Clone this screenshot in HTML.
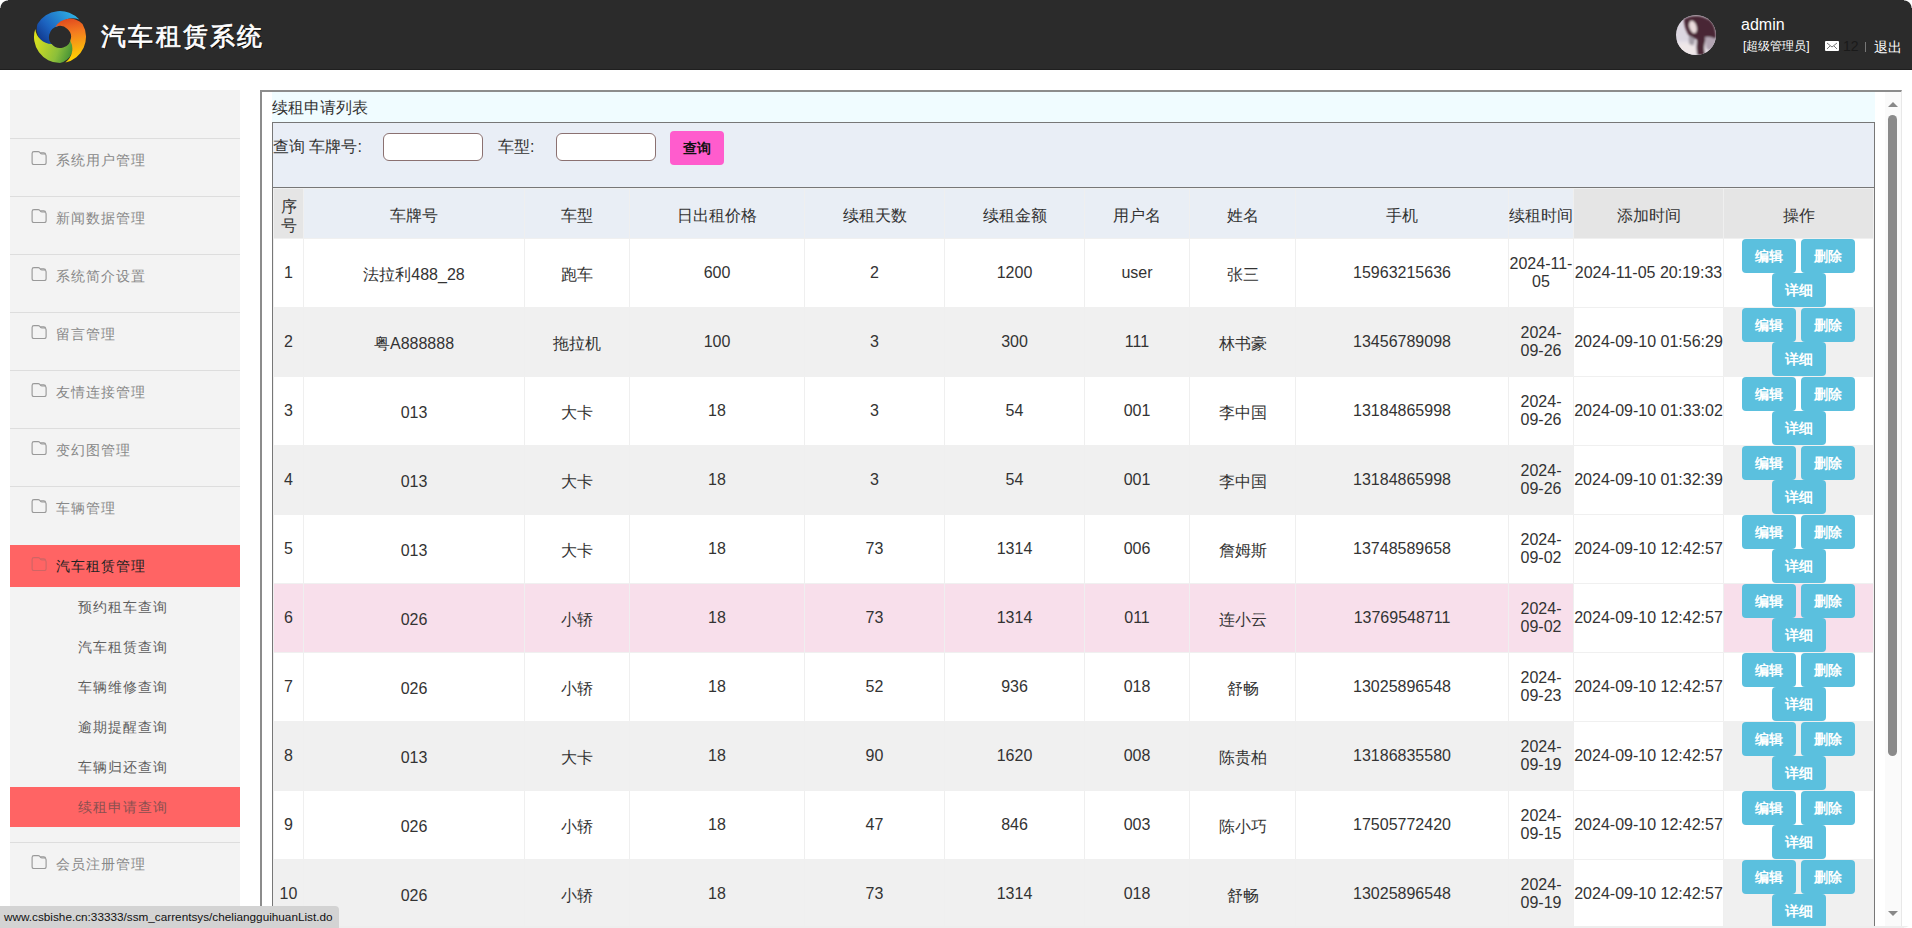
<!DOCTYPE html><html><head><meta charset="utf-8"><title>汽车租赁系统</title><style>*{box-sizing:border-box}
html,body{margin:0;padding:0;width:1912px;height:928px;overflow:hidden;background:#fff;font-family:"Liberation Sans",sans-serif;color:#333}
div,span{position:absolute}
.hdr{left:0;top:0;width:1912px;height:70px;background:#2b2b2b;border-bottom:1px solid #1f1f1f}
.logo{left:33px;top:10px;width:54px;height:54px}
.title{left:101px;top:20px;font-size:25px;font-weight:normal;-webkit-text-stroke:0.7px #fff;color:#fff;white-space:nowrap;letter-spacing:2.3px;text-shadow:1px 1px 0 #000}
.avatar{left:1676px;top:15px;width:40px;height:40px}
.uname{left:1741px;top:16px;font-size:16px;color:#fff;white-space:nowrap}
.role{left:1743px;top:38px;font-size:12px;color:#fff;white-space:nowrap}
.mail{left:1825px;top:41px;width:14px;height:10px}
.cnt{left:1843px;top:38px;font-size:14px;color:#1a1a1a}
.sep{left:1865px;top:42px;width:1px;height:10px;background:#777}
.logout{left:1874px;top:39px;font-size:14px;color:#fff;white-space:nowrap}

.side{left:10px;top:90px;width:230px;height:850px;background:#f3f3f3}
.mi{left:10px;width:230px;height:1px;background:#ddd}
.mt{font-size:14px;color:#888;white-space:nowrap;left:56px;letter-spacing:1px;margin-top:1px}
.ic{left:31px;width:15px;height:14px}
.act{left:10px;width:230px;background:#ff6464}
.st{font-size:14px;color:#5e5e5e;white-space:nowrap;left:78px;letter-spacing:1px;margin-top:1px}

.frame{left:260px;top:90px;width:1642px;height:900px;border-left:2px solid #8c8c8c;border-top:2px solid #8c8c8c;border-right:1px solid #e8e8e8;background:#fff}
.ttl{left:272px;top:92px;width:1603px;height:30px;background:#f0fcff;font-size:16px;color:#333;line-height:32px;padding-left:0;white-space:nowrap}
.box{left:272px;top:122px;width:1603px;height:820px;border:1px solid #777;border-bottom:none;background:#fff}
.search{left:273px;top:123px;width:1601px;height:64px;background:#e9eef6;border-bottom:0}
.lbl1{left:0px;top:14px;font-size:16px;white-space:nowrap}
.lbl2{left:225px;top:14px;font-size:16px;white-space:nowrap}
.inp{top:10px;width:100px;height:28px;border:1px solid #8b7171;border-radius:6px;background:#fff}
.inp1{left:110px}
.inp2{left:283px}
.qbtn{left:397px;top:8px;width:54px;height:34px;border-radius:4px;background:#ff5ccd;font-size:14px;font-weight:bold;color:#111;text-align:center;line-height:34px}

.hc,.dc{display:flex;align-items:center;justify-content:center;text-align:center;font-size:16px;color:#333;line-height:18px}
.hc{line-height:19px}
.hc span,.dc span{position:static}
.hb{background:#e9eef5}
.hg{background:#e5e5e5}
.od{background:#fff}
.ev{background:#f0f0f0}
.hv{background:#f8dfeb}
.vl{top:189px;width:1px;height:740px;background:#efefef}
.hl{left:273px;width:1601px;height:1px;background:#f0f0f0}
.ops{position:static;width:150px;line-height:0;font-size:0}
.b{position:relative;display:inline-block;width:54px;height:34px;margin:0 2.5px;border-radius:4px;background:#5bc0de;color:#fff;font-size:14px;font-weight:bold;line-height:34px;text-align:center;vertical-align:top}

.sb{left:1885px;top:92px;width:16px;height:840px;background:#fafafa}
.sbup{left:1888px;top:102px;width:0;height:0;border-left:5px solid transparent;border-right:5px solid transparent;border-bottom:5px solid #888}
.sbdn{left:1888px;top:911px;width:0;height:0;border-left:5px solid transparent;border-right:5px solid transparent;border-top:5px solid #888}
.sbth{left:1888px;top:115px;width:9px;height:641px;border-radius:5px;background:#8a8a8a}

.status{left:0;top:906px;height:22px;padding:0 6px 0 4px;background:#d3d3d3;border-top-right-radius:4px;font-size:11.75px;line-height:22px;color:#111;white-space:nowrap}
.corner{width:8px;height:8px}
.tl{left:0;top:0;background:radial-gradient(circle at 100% 100%,transparent 7px,#fff 8px)}
.tr{right:0;top:0;left:auto;background:radial-gradient(circle at 0 100%,transparent 7px,#fff 8px)}
.br{right:0;bottom:0;left:auto;top:auto;background:radial-gradient(circle at 0 0,transparent 7px,#fff 8px)}
.dc.cj span{margin-top:3px}
.hc span{margin-top:4px}
.hdl{left:273px;top:187px;width:1601px;height:1px;background:#777}
</style></head><body>
<div class="hdr"></div>
<svg style="position:absolute;left:33px;top:10px" width="54" height="54" viewBox="0 0 54 54"><defs><linearGradient id="go" gradientUnits="userSpaceOnUse" x1="22.5" y1="1.4" x2="31.5" y2="52.6"><stop offset="0" stop-color="#d42a1e"/><stop offset="0.45" stop-color="#f47a20"/><stop offset="1" stop-color="#ffd800"/></linearGradient><linearGradient id="gg" gradientUnits="userSpaceOnUse" x1="51.4" y1="35.9" x2="2.6" y2="18.1"><stop offset="0" stop-color="#167535"/><stop offset="0.45" stop-color="#8cbf3a"/><stop offset="1" stop-color="#e2e41c"/></linearGradient><linearGradient id="gb" gradientUnits="userSpaceOnUse" x1="7.1" y1="43.7" x2="46.9" y2="10.3"><stop offset="0" stop-color="#0a1f70"/><stop offset="0.45" stop-color="#1c62bf"/><stop offset="1" stop-color="#2eb0e4"/></linearGradient></defs><path d="M20.69 36.01 A17 17 0 0 1 4.48 14.00 A26 26 0 0 1 46.32 9.60 A17 17 0 0 0 25.09 16.17 A11 11 0 0 0 20.69 36.01 Z" fill="url(#gb)"/><path d="M37.96 27.96 A17 17 0 0 1 27.00 53.00 A26 26 0 0 1 2.27 18.97 A17 17 0 0 0 18.57 34.07 A11 11 0 0 0 37.96 27.96 Z" fill="url(#gg)"/><path d="M22.35 17.03 A17 17 0 0 1 49.52 14.00 A26 26 0 0 1 32.41 52.43 A17 17 0 0 0 37.34 30.76 A11 11 0 0 0 22.35 17.03 Z" fill="url(#go)"/></svg>
<div class="title">汽车租赁系统</div>
<svg class="avatar" style="position:absolute;left:1676px;top:15px" width="40" height="40" viewBox="0 0 40 40"><defs><clipPath id="avc"><circle cx="20" cy="20" r="20"/></clipPath><filter id="avb" x="-20%" y="-20%" width="140%" height="140%"><feGaussianBlur stdDeviation="1.2"/></filter></defs>
<g clip-path="url(#avc)"><rect width="40" height="40" fill="#dcd7e1"/><g filter="url(#avb)">
<rect x="0" y="26" width="40" height="14" fill="#e8e2e8"/>
<path d="M8 4 Q20 -3 34 5 Q41 12 40 24 Q34 22 30 24 Q27 31 29 40 L21 40 Q20 31 21 24 Q15 24 12 19 Q8 12 8 4Z" fill="#4a2535"/>
<ellipse cx="17" cy="12" rx="3.6" ry="6.5" transform="rotate(-18 17 12)" fill="#eadcdc"/>
<path d="M29 22 Q36 21 40 25 L40 36 Q34 37 30 33 Z" fill="#b3a5b3"/>
<path d="M13 21 Q17 21 19 25 Q18 31 15 33 Q12 29 13 21Z" fill="#a39ca6"/>
<path d="M3 30 Q10 27 18 31 Q21 35 20 40 L4 40 Q2 35 3 30Z" fill="#efe7e8"/>
</g></g></svg>
<div class="uname">admin</div>
<div class="role">[超级管理员]</div>
<svg class="mail" style="position:absolute;left:1825px;top:41px" width="14" height="10" viewBox="0 0 14 10"><rect x="0" y="0" width="14" height="10" rx="1" fill="#fff"/><path d="M2 2 L7 6 L12 2 M2 8 L5 5 M12 8 L9 5" stroke="#777" stroke-width="1" fill="none"/></svg>
<div class="cnt">12</div>
<div class="sep"></div>
<div class="logout">退出</div>

<div class="side"></div>
<div class="mi" style="top:138px"></div>
<div class="mi" style="top:196px"></div>
<div class="mi" style="top:254px"></div>
<div class="mi" style="top:312px"></div>
<div class="mi" style="top:370px"></div>
<div class="mi" style="top:428px"></div>
<div class="mi" style="top:486px"></div>
<svg style="position:absolute;left:31px;top:150px;opacity:1" width="16" height="15" viewBox="0 0 16 15"><path d="M3 1.6 H7.3 Q8.6 1.6 9.1 2.9 Q9.5 4 10.8 4 H13.2 Q15.1 4 15.1 6 V12.7 Q15.1 14.6 13.2 14.6 H3 Q1.1 14.6 1.1 12.7 V3.5 Q1.1 1.6 3 1.6 Z M8.8 2.7 H12.8 Q14.4 2.7 14.8 4.6" stroke="#999" stroke-width="1.15" fill="none"/></svg>
<div class="mt" style="top:151px">系统用户管理</div>
<svg style="position:absolute;left:31px;top:208px;opacity:1" width="16" height="15" viewBox="0 0 16 15"><path d="M3 1.6 H7.3 Q8.6 1.6 9.1 2.9 Q9.5 4 10.8 4 H13.2 Q15.1 4 15.1 6 V12.7 Q15.1 14.6 13.2 14.6 H3 Q1.1 14.6 1.1 12.7 V3.5 Q1.1 1.6 3 1.6 Z M8.8 2.7 H12.8 Q14.4 2.7 14.8 4.6" stroke="#999" stroke-width="1.15" fill="none"/></svg>
<div class="mt" style="top:209px">新闻数据管理</div>
<svg style="position:absolute;left:31px;top:266px;opacity:1" width="16" height="15" viewBox="0 0 16 15"><path d="M3 1.6 H7.3 Q8.6 1.6 9.1 2.9 Q9.5 4 10.8 4 H13.2 Q15.1 4 15.1 6 V12.7 Q15.1 14.6 13.2 14.6 H3 Q1.1 14.6 1.1 12.7 V3.5 Q1.1 1.6 3 1.6 Z M8.8 2.7 H12.8 Q14.4 2.7 14.8 4.6" stroke="#999" stroke-width="1.15" fill="none"/></svg>
<div class="mt" style="top:267px">系统简介设置</div>
<svg style="position:absolute;left:31px;top:324px;opacity:1" width="16" height="15" viewBox="0 0 16 15"><path d="M3 1.6 H7.3 Q8.6 1.6 9.1 2.9 Q9.5 4 10.8 4 H13.2 Q15.1 4 15.1 6 V12.7 Q15.1 14.6 13.2 14.6 H3 Q1.1 14.6 1.1 12.7 V3.5 Q1.1 1.6 3 1.6 Z M8.8 2.7 H12.8 Q14.4 2.7 14.8 4.6" stroke="#999" stroke-width="1.15" fill="none"/></svg>
<div class="mt" style="top:325px">留言管理</div>
<svg style="position:absolute;left:31px;top:382px;opacity:1" width="16" height="15" viewBox="0 0 16 15"><path d="M3 1.6 H7.3 Q8.6 1.6 9.1 2.9 Q9.5 4 10.8 4 H13.2 Q15.1 4 15.1 6 V12.7 Q15.1 14.6 13.2 14.6 H3 Q1.1 14.6 1.1 12.7 V3.5 Q1.1 1.6 3 1.6 Z M8.8 2.7 H12.8 Q14.4 2.7 14.8 4.6" stroke="#999" stroke-width="1.15" fill="none"/></svg>
<div class="mt" style="top:383px">友情连接管理</div>
<svg style="position:absolute;left:31px;top:440px;opacity:1" width="16" height="15" viewBox="0 0 16 15"><path d="M3 1.6 H7.3 Q8.6 1.6 9.1 2.9 Q9.5 4 10.8 4 H13.2 Q15.1 4 15.1 6 V12.7 Q15.1 14.6 13.2 14.6 H3 Q1.1 14.6 1.1 12.7 V3.5 Q1.1 1.6 3 1.6 Z M8.8 2.7 H12.8 Q14.4 2.7 14.8 4.6" stroke="#999" stroke-width="1.15" fill="none"/></svg>
<div class="mt" style="top:441px">变幻图管理</div>
<svg style="position:absolute;left:31px;top:498px;opacity:1" width="16" height="15" viewBox="0 0 16 15"><path d="M3 1.6 H7.3 Q8.6 1.6 9.1 2.9 Q9.5 4 10.8 4 H13.2 Q15.1 4 15.1 6 V12.7 Q15.1 14.6 13.2 14.6 H3 Q1.1 14.6 1.1 12.7 V3.5 Q1.1 1.6 3 1.6 Z M8.8 2.7 H12.8 Q14.4 2.7 14.8 4.6" stroke="#999" stroke-width="1.15" fill="none"/></svg>
<div class="mt" style="top:499px">车辆管理</div>
<div class="act" style="top:545px;height:42px"></div>
<svg style="position:absolute;left:31px;top:556px;opacity:0.3" width="16" height="15" viewBox="0 0 16 15"><path d="M3 1.6 H7.3 Q8.6 1.6 9.1 2.9 Q9.5 4 10.8 4 H13.2 Q15.1 4 15.1 6 V12.7 Q15.1 14.6 13.2 14.6 H3 Q1.1 14.6 1.1 12.7 V3.5 Q1.1 1.6 3 1.6 Z M8.8 2.7 H12.8 Q14.4 2.7 14.8 4.6" stroke="#666" stroke-width="1.15" fill="none"/></svg>
<div class="mt" style="top:557px;color:#222">汽车租赁管理</div>
<div class="act" style="top:787px;height:40px"></div>
<div class="st" style="top:598px">预约租车查询</div>
<div class="st" style="top:638px">汽车租赁查询</div>
<div class="st" style="top:678px">车辆维修查询</div>
<div class="st" style="top:718px">逾期提醒查询</div>
<div class="st" style="top:758px">车辆归还查询</div>
<div class="st" style="top:798px;color:#8a5050">续租申请查询</div>
<div class="mi" style="top:842px"></div>
<svg style="position:absolute;left:31px;top:854px;opacity:1" width="16" height="15" viewBox="0 0 16 15"><path d="M3 1.6 H7.3 Q8.6 1.6 9.1 2.9 Q9.5 4 10.8 4 H13.2 Q15.1 4 15.1 6 V12.7 Q15.1 14.6 13.2 14.6 H3 Q1.1 14.6 1.1 12.7 V3.5 Q1.1 1.6 3 1.6 Z M8.8 2.7 H12.8 Q14.4 2.7 14.8 4.6" stroke="#999" stroke-width="1.15" fill="none"/></svg>
<div class="mt" style="top:855px">会员注册管理</div>
<div class="frame"></div><div class="ttl">续租申请列表</div>
<div class="box"></div><div class="search"><span class="lbl1">查询 车牌号:</span><span class="inp inp1"></span><span class="lbl2">车型:</span><span class="inp inp2"></span><span class="qbtn">查询</span></div>
<div class="grid"><div class="hc hg" style="left:274px;top:189px;width:29px;height:49px"><span>序<br>号</span></div><div class="hc hb" style="left:304px;top:189px;width:220px;height:49px"><span>车牌号</span></div><div class="hc hb" style="left:525px;top:189px;width:104px;height:49px"><span>车型</span></div><div class="hc hb" style="left:630px;top:189px;width:174px;height:49px"><span>日出租价格</span></div><div class="hc hb" style="left:805px;top:189px;width:139px;height:49px"><span>续租天数</span></div><div class="hc hb" style="left:945px;top:189px;width:139px;height:49px"><span>续租金额</span></div><div class="hc hb" style="left:1085px;top:189px;width:104px;height:49px"><span>用户名</span></div><div class="hc hb" style="left:1190px;top:189px;width:105px;height:49px"><span>姓名</span></div><div class="hc hb" style="left:1296px;top:189px;width:212px;height:49px"><span>手机</span></div><div class="hc hb" style="left:1509px;top:189px;width:64px;height:49px"><span>续租时间</span></div><div class="hc hg" style="left:1574px;top:189px;width:149px;height:49px"><span>添加时间</span></div><div class="hc hg" style="left:1724px;top:189px;width:149px;height:49px"><span>操作</span></div><div class="dc od" style="left:274px;top:239px;width:29px;height:68px"><span>1</span></div><div class="dc od cj" style="left:304px;top:239px;width:220px;height:68px"><span>法拉利488_28</span></div><div class="dc od cj" style="left:525px;top:239px;width:104px;height:68px"><span>跑车</span></div><div class="dc od" style="left:630px;top:239px;width:174px;height:68px"><span>600</span></div><div class="dc od" style="left:805px;top:239px;width:139px;height:68px"><span>2</span></div><div class="dc od" style="left:945px;top:239px;width:139px;height:68px"><span>1200</span></div><div class="dc od" style="left:1085px;top:239px;width:104px;height:68px"><span>user</span></div><div class="dc od cj" style="left:1190px;top:239px;width:105px;height:68px"><span>张三</span></div><div class="dc od" style="left:1296px;top:239px;width:212px;height:68px"><span>15963215636</span></div><div class="dc od" style="left:1509px;top:239px;width:64px;height:68px"><span>2024-11-<br>05</span></div><div class="dc od" style="left:1574px;top:239px;width:149px;height:68px"><span>2024-11-05 20:19:33</span></div><div class="dc od" style="left:1724px;top:239px;width:149px;height:68px"><span><div class="ops"><span class="b">编辑</span><span class="b">删除</span><br><span class="b">详细</span></div></span></div><div class="dc ev" style="left:274px;top:308px;width:29px;height:68px"><span>2</span></div><div class="dc ev cj" style="left:304px;top:308px;width:220px;height:68px"><span>粤A888888</span></div><div class="dc ev cj" style="left:525px;top:308px;width:104px;height:68px"><span>拖拉机</span></div><div class="dc ev" style="left:630px;top:308px;width:174px;height:68px"><span>100</span></div><div class="dc ev" style="left:805px;top:308px;width:139px;height:68px"><span>3</span></div><div class="dc ev" style="left:945px;top:308px;width:139px;height:68px"><span>300</span></div><div class="dc ev" style="left:1085px;top:308px;width:104px;height:68px"><span>111</span></div><div class="dc ev cj" style="left:1190px;top:308px;width:105px;height:68px"><span>林书豪</span></div><div class="dc ev" style="left:1296px;top:308px;width:212px;height:68px"><span>13456789098</span></div><div class="dc ev" style="left:1509px;top:308px;width:64px;height:68px"><span>2024-<br>09-26</span></div><div class="dc od" style="left:1574px;top:308px;width:149px;height:68px"><span>2024-09-10 01:56:29</span></div><div class="dc ev" style="left:1724px;top:308px;width:149px;height:68px"><span><div class="ops"><span class="b">编辑</span><span class="b">删除</span><br><span class="b">详细</span></div></span></div><div class="dc od" style="left:274px;top:377px;width:29px;height:68px"><span>3</span></div><div class="dc od cj" style="left:304px;top:377px;width:220px;height:68px"><span>013</span></div><div class="dc od cj" style="left:525px;top:377px;width:104px;height:68px"><span>大卡</span></div><div class="dc od" style="left:630px;top:377px;width:174px;height:68px"><span>18</span></div><div class="dc od" style="left:805px;top:377px;width:139px;height:68px"><span>3</span></div><div class="dc od" style="left:945px;top:377px;width:139px;height:68px"><span>54</span></div><div class="dc od" style="left:1085px;top:377px;width:104px;height:68px"><span>001</span></div><div class="dc od cj" style="left:1190px;top:377px;width:105px;height:68px"><span>李中国</span></div><div class="dc od" style="left:1296px;top:377px;width:212px;height:68px"><span>13184865998</span></div><div class="dc od" style="left:1509px;top:377px;width:64px;height:68px"><span>2024-<br>09-26</span></div><div class="dc od" style="left:1574px;top:377px;width:149px;height:68px"><span>2024-09-10 01:33:02</span></div><div class="dc od" style="left:1724px;top:377px;width:149px;height:68px"><span><div class="ops"><span class="b">编辑</span><span class="b">删除</span><br><span class="b">详细</span></div></span></div><div class="dc ev" style="left:274px;top:446px;width:29px;height:68px"><span>4</span></div><div class="dc ev cj" style="left:304px;top:446px;width:220px;height:68px"><span>013</span></div><div class="dc ev cj" style="left:525px;top:446px;width:104px;height:68px"><span>大卡</span></div><div class="dc ev" style="left:630px;top:446px;width:174px;height:68px"><span>18</span></div><div class="dc ev" style="left:805px;top:446px;width:139px;height:68px"><span>3</span></div><div class="dc ev" style="left:945px;top:446px;width:139px;height:68px"><span>54</span></div><div class="dc ev" style="left:1085px;top:446px;width:104px;height:68px"><span>001</span></div><div class="dc ev cj" style="left:1190px;top:446px;width:105px;height:68px"><span>李中国</span></div><div class="dc ev" style="left:1296px;top:446px;width:212px;height:68px"><span>13184865998</span></div><div class="dc ev" style="left:1509px;top:446px;width:64px;height:68px"><span>2024-<br>09-26</span></div><div class="dc od" style="left:1574px;top:446px;width:149px;height:68px"><span>2024-09-10 01:32:39</span></div><div class="dc ev" style="left:1724px;top:446px;width:149px;height:68px"><span><div class="ops"><span class="b">编辑</span><span class="b">删除</span><br><span class="b">详细</span></div></span></div><div class="dc od" style="left:274px;top:515px;width:29px;height:68px"><span>5</span></div><div class="dc od cj" style="left:304px;top:515px;width:220px;height:68px"><span>013</span></div><div class="dc od cj" style="left:525px;top:515px;width:104px;height:68px"><span>大卡</span></div><div class="dc od" style="left:630px;top:515px;width:174px;height:68px"><span>18</span></div><div class="dc od" style="left:805px;top:515px;width:139px;height:68px"><span>73</span></div><div class="dc od" style="left:945px;top:515px;width:139px;height:68px"><span>1314</span></div><div class="dc od" style="left:1085px;top:515px;width:104px;height:68px"><span>006</span></div><div class="dc od cj" style="left:1190px;top:515px;width:105px;height:68px"><span>詹姆斯</span></div><div class="dc od" style="left:1296px;top:515px;width:212px;height:68px"><span>13748589658</span></div><div class="dc od" style="left:1509px;top:515px;width:64px;height:68px"><span>2024-<br>09-02</span></div><div class="dc od" style="left:1574px;top:515px;width:149px;height:68px"><span>2024-09-10 12:42:57</span></div><div class="dc od" style="left:1724px;top:515px;width:149px;height:68px"><span><div class="ops"><span class="b">编辑</span><span class="b">删除</span><br><span class="b">详细</span></div></span></div><div class="dc hv" style="left:274px;top:584px;width:29px;height:68px"><span>6</span></div><div class="dc hv cj" style="left:304px;top:584px;width:220px;height:68px"><span>026</span></div><div class="dc hv cj" style="left:525px;top:584px;width:104px;height:68px"><span>小轿</span></div><div class="dc hv" style="left:630px;top:584px;width:174px;height:68px"><span>18</span></div><div class="dc hv" style="left:805px;top:584px;width:139px;height:68px"><span>73</span></div><div class="dc hv" style="left:945px;top:584px;width:139px;height:68px"><span>1314</span></div><div class="dc hv" style="left:1085px;top:584px;width:104px;height:68px"><span>011</span></div><div class="dc hv cj" style="left:1190px;top:584px;width:105px;height:68px"><span>连小云</span></div><div class="dc hv" style="left:1296px;top:584px;width:212px;height:68px"><span>13769548711</span></div><div class="dc hv" style="left:1509px;top:584px;width:64px;height:68px"><span>2024-<br>09-02</span></div><div class="dc od" style="left:1574px;top:584px;width:149px;height:68px"><span>2024-09-10 12:42:57</span></div><div class="dc hv" style="left:1724px;top:584px;width:149px;height:68px"><span><div class="ops"><span class="b">编辑</span><span class="b">删除</span><br><span class="b">详细</span></div></span></div><div class="dc od" style="left:274px;top:653px;width:29px;height:68px"><span>7</span></div><div class="dc od cj" style="left:304px;top:653px;width:220px;height:68px"><span>026</span></div><div class="dc od cj" style="left:525px;top:653px;width:104px;height:68px"><span>小轿</span></div><div class="dc od" style="left:630px;top:653px;width:174px;height:68px"><span>18</span></div><div class="dc od" style="left:805px;top:653px;width:139px;height:68px"><span>52</span></div><div class="dc od" style="left:945px;top:653px;width:139px;height:68px"><span>936</span></div><div class="dc od" style="left:1085px;top:653px;width:104px;height:68px"><span>018</span></div><div class="dc od cj" style="left:1190px;top:653px;width:105px;height:68px"><span>舒畅</span></div><div class="dc od" style="left:1296px;top:653px;width:212px;height:68px"><span>13025896548</span></div><div class="dc od" style="left:1509px;top:653px;width:64px;height:68px"><span>2024-<br>09-23</span></div><div class="dc od" style="left:1574px;top:653px;width:149px;height:68px"><span>2024-09-10 12:42:57</span></div><div class="dc od" style="left:1724px;top:653px;width:149px;height:68px"><span><div class="ops"><span class="b">编辑</span><span class="b">删除</span><br><span class="b">详细</span></div></span></div><div class="dc ev" style="left:274px;top:722px;width:29px;height:68px"><span>8</span></div><div class="dc ev cj" style="left:304px;top:722px;width:220px;height:68px"><span>013</span></div><div class="dc ev cj" style="left:525px;top:722px;width:104px;height:68px"><span>大卡</span></div><div class="dc ev" style="left:630px;top:722px;width:174px;height:68px"><span>18</span></div><div class="dc ev" style="left:805px;top:722px;width:139px;height:68px"><span>90</span></div><div class="dc ev" style="left:945px;top:722px;width:139px;height:68px"><span>1620</span></div><div class="dc ev" style="left:1085px;top:722px;width:104px;height:68px"><span>008</span></div><div class="dc ev cj" style="left:1190px;top:722px;width:105px;height:68px"><span>陈贵柏</span></div><div class="dc ev" style="left:1296px;top:722px;width:212px;height:68px"><span>13186835580</span></div><div class="dc ev" style="left:1509px;top:722px;width:64px;height:68px"><span>2024-<br>09-19</span></div><div class="dc od" style="left:1574px;top:722px;width:149px;height:68px"><span>2024-09-10 12:42:57</span></div><div class="dc ev" style="left:1724px;top:722px;width:149px;height:68px"><span><div class="ops"><span class="b">编辑</span><span class="b">删除</span><br><span class="b">详细</span></div></span></div><div class="dc od" style="left:274px;top:791px;width:29px;height:68px"><span>9</span></div><div class="dc od cj" style="left:304px;top:791px;width:220px;height:68px"><span>026</span></div><div class="dc od cj" style="left:525px;top:791px;width:104px;height:68px"><span>小轿</span></div><div class="dc od" style="left:630px;top:791px;width:174px;height:68px"><span>18</span></div><div class="dc od" style="left:805px;top:791px;width:139px;height:68px"><span>47</span></div><div class="dc od" style="left:945px;top:791px;width:139px;height:68px"><span>846</span></div><div class="dc od" style="left:1085px;top:791px;width:104px;height:68px"><span>003</span></div><div class="dc od cj" style="left:1190px;top:791px;width:105px;height:68px"><span>陈小巧</span></div><div class="dc od" style="left:1296px;top:791px;width:212px;height:68px"><span>17505772420</span></div><div class="dc od" style="left:1509px;top:791px;width:64px;height:68px"><span>2024-<br>09-15</span></div><div class="dc od" style="left:1574px;top:791px;width:149px;height:68px"><span>2024-09-10 12:42:57</span></div><div class="dc od" style="left:1724px;top:791px;width:149px;height:68px"><span><div class="ops"><span class="b">编辑</span><span class="b">删除</span><br><span class="b">详细</span></div></span></div><div class="dc ev" style="left:274px;top:860px;width:29px;height:68px"><span>10</span></div><div class="dc ev cj" style="left:304px;top:860px;width:220px;height:68px"><span>026</span></div><div class="dc ev cj" style="left:525px;top:860px;width:104px;height:68px"><span>小轿</span></div><div class="dc ev" style="left:630px;top:860px;width:174px;height:68px"><span>18</span></div><div class="dc ev" style="left:805px;top:860px;width:139px;height:68px"><span>73</span></div><div class="dc ev" style="left:945px;top:860px;width:139px;height:68px"><span>1314</span></div><div class="dc ev" style="left:1085px;top:860px;width:104px;height:68px"><span>018</span></div><div class="dc ev cj" style="left:1190px;top:860px;width:105px;height:68px"><span>舒畅</span></div><div class="dc ev" style="left:1296px;top:860px;width:212px;height:68px"><span>13025896548</span></div><div class="dc ev" style="left:1509px;top:860px;width:64px;height:68px"><span>2024-<br>09-19</span></div><div class="dc od" style="left:1574px;top:860px;width:149px;height:68px"><span>2024-09-10 12:42:57</span></div><div class="dc ev" style="left:1724px;top:860px;width:149px;height:68px"><span><div class="ops"><span class="b">编辑</span><span class="b">删除</span><br><span class="b">详细</span></div></span></div><div class="vl" style="left:273px"></div><div class="vl" style="left:303px"></div><div class="vl" style="left:524px"></div><div class="vl" style="left:629px"></div><div class="vl" style="left:804px"></div><div class="vl" style="left:944px"></div><div class="vl" style="left:1084px"></div><div class="vl" style="left:1189px"></div><div class="vl" style="left:1295px"></div><div class="vl" style="left:1508px"></div><div class="vl" style="left:1573px"></div><div class="vl" style="left:1723px"></div><div class="vl" style="left:1873px"></div><div class="hl" style="top:238px"></div><div class="hl" style="top:307px"></div><div class="hl" style="top:376px"></div><div class="hl" style="top:445px"></div><div class="hl" style="top:514px"></div><div class="hl" style="top:583px"></div><div class="hl" style="top:652px"></div><div class="hl" style="top:721px"></div><div class="hl" style="top:790px"></div><div class="hl" style="top:859px"></div><div class="hl" style="top:928px"></div><div class="hl" style="top:188px"></div><div class="hdl"></div></div>
<div class="sb"></div><div class="sbup"></div><div class="sbth"></div><div class="sbdn"></div>
<div style="left:262px;top:926px;width:1650px;height:2px;background:#eeeeee"></div>
<div class="status">www.csbishe.cn:33333/ssm_carrentsys/cheliangguihuanList.do</div>
<div class="corner tl"></div><div class="corner tr"></div><div class="corner br"></div>
</body></html>
